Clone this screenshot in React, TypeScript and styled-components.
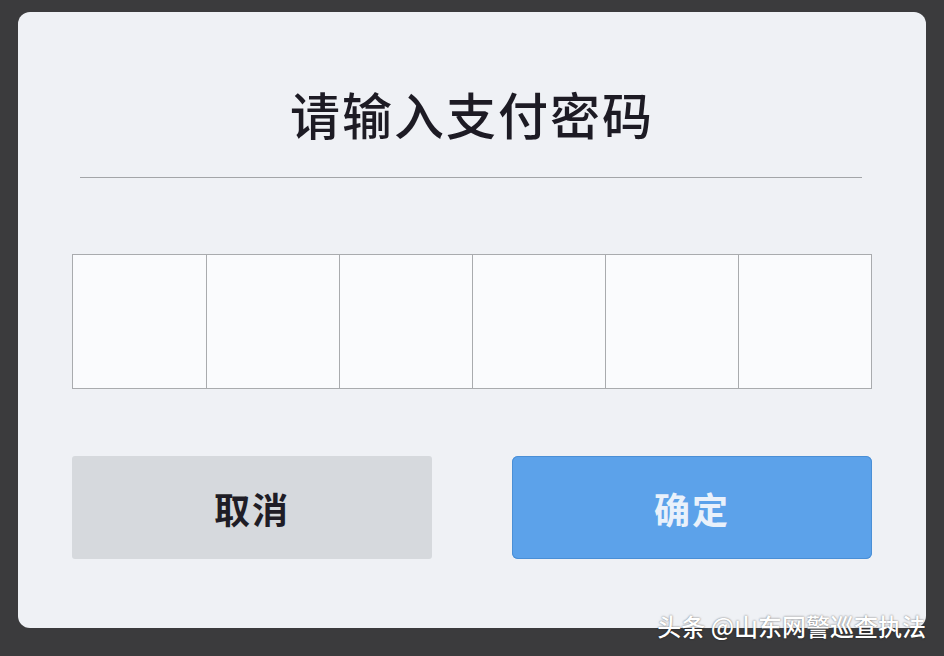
import React from "react";
import styled, { createGlobalStyle } from "styled-components";

const Global = createGlobalStyle`
  html, body { margin: 0; padding: 0; background: #3b3b3d; }
  body { font-family: "Noto Sans CJK SC", "Noto Sans", sans-serif; }
`;

const Page = styled.div`
  position: relative;
  width: 944px;
  height: 656px;
  box-sizing: border-box;
  padding: 12px 18px 28px 18px;
  background: #3b3b3d;
`;

const Card = styled.div`
  height: 100%;
  box-sizing: border-box;
  background: #eff1f5;
  border-radius: 12px;
  display: flex;
  flex-direction: column;
  align-items: stretch;
  padding: 0 54px 0 54px;
`;

const Title = styled.h1`
  margin: 0;
  padding-top: 76px;
  height: 89px;
  box-sizing: content-box;
  font-size: 50px;
  font-weight: 500;
  line-height: 50px;
  text-align: center;
  color: #1d1b24;
  letter-spacing: 2px;
`;

const Divider = styled.div`
  height: 1px;
  background: #a3a5a8;
  margin: 0 10px 0 8px;
`;

const Boxes = styled.div`
  margin-top: 76px;
  display: grid;
  grid-template-columns: repeat(6, 1fr);
  height: 135px;
  border: 1px solid #a9abae;
  background: #fafbfd;
  box-sizing: border-box;
`;

const Cell = styled.div<{ $first?: boolean }>`
  border-left: ${(p) => (p.$first ? "none" : "1px solid #a9abae")};
`;

const Buttons = styled.div`
  margin-top: 67px;
  display: flex;
  justify-content: space-between;
`;

const Button = styled.div<{ $primary?: boolean }>`
  width: 360px;
  height: 103px;
  border-radius: ${(p) => (p.$primary ? "6px" : "3px")};
  background: ${(p) => (p.$primary ? "#5ca2ea" : "#d6d9dd")};
  box-shadow: ${(p) => (p.$primary ? "inset 0 0 0 1px #4a8fd6" : "none")};
  color: ${(p) => (p.$primary ? "#e9f1fb" : "#1f1d26")};
  display: flex;
  align-items: center;
  justify-content: center;
  font-size: 36px;
  font-weight: 700;
  letter-spacing: 2px;
`;

const Watermark = styled.div`
  position: absolute;
  right: 18px;
  bottom: 17px;
  color: #ffffff;
  font-size: 24px;
  font-weight: 500;
  line-height: 26px;
  text-shadow: 0 0 2px rgba(0, 0, 0, 0.6);
  letter-spacing: 0px;
`;

export default function App() {
  return (
    <>
      <Global />
      <Page>
        <Card>
          <Title>请输入支付密码</Title>
          <Divider />
          <Boxes>
            {Array.from({ length: 6 }).map((_, i) => (
              <Cell key={i} $first={i === 0} />
            ))}
          </Boxes>
          <Buttons>
            <Button>取消</Button>
            <Button $primary>确定</Button>
          </Buttons>
        </Card>
        <Watermark>头条 @山东网警巡查执法</Watermark>
      </Page>
    </>
  );
}
